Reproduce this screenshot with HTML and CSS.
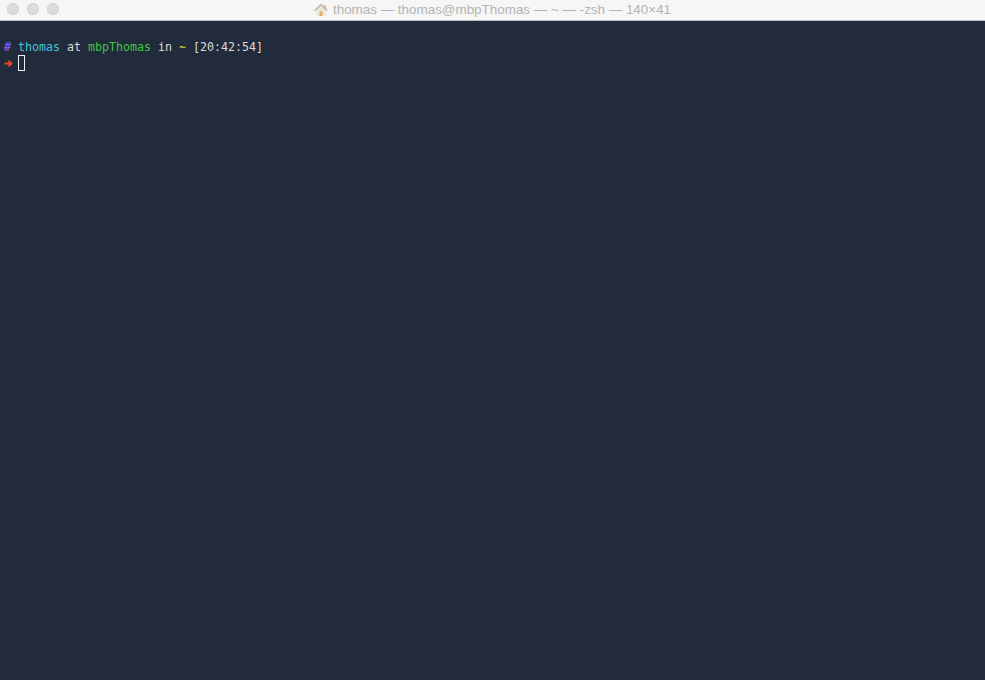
FILE: index.html
```html
<!DOCTYPE html>
<html lang="en">
<head>
<meta charset="utf-8">
<title>thomas — zsh</title>
<link rel="stylesheet" href="styles.css">
</head>
<body>
<div class="window">
  <header class="titlebar">
    <div class="lights">
      <span class="light"></span>
      <span class="light"></span>
      <span class="light"></span>
    </div>
    <div class="title">
      <svg class="home" width="14" height="14" viewBox="0 0 14 14" aria-hidden="true">
        <path d="M2.6 7V13H11.4V7L7 3Z" fill="#ece6dc"/>
        <path d="M0.8 7.6L7 1.8L13.2 7.6" fill="none" stroke="#c4b4a6" stroke-width="1.5"/>
        <rect x="10" y="2" width="1.6" height="3" fill="#c4b4a6"/>
        <rect x="5.6" y="8.4" width="2.8" height="4.6" fill="#e9a85c"/>
      </svg>
      <span>thomas — thomas@mbpThomas — ~ — -zsh — 140×41</span>
    </div>
  </header>
  <main class="terminal">
    <div class="line"></div>
    <div class="line"><span class="hash">#</span> <span class="user">thomas</span> <span class="plain">at</span> <span class="host">mbpThomas</span> <span class="plain">in</span> <span class="dir">~</span> <span class="plain">[20:42:54]</span></div>
    <div class="line"><svg class="arrow" width="9" height="7" viewBox="0 0 9 7" aria-hidden="true"><path d="M0.5 3.5H6.5M4.4 0.8L7.6 3.5L4.4 6.2" fill="none" stroke="#df4a2c" stroke-width="1.8"/></svg><span class="cursor"></span></div>
  </main>
</div>
</body>
</html>
```
FILE: styles.css
```css
html, body {
  margin: 0;
  padding: 0;
  height: 100%;
  overflow: hidden;
}
.window {
  display: flex;
  flex-direction: column;
  height: 680px;
  background: #222b3b;
}
.titlebar {
  display: flex;
  align-items: center;
  justify-content: center;
  position: relative;
  flex: none;
  height: 21px;
  box-sizing: border-box;
  background: #f6f6f6;
  border-bottom: 1px solid #bdbdbd;
}
.lights {
  position: absolute;
  left: 7px;
  top: 3px;
  display: flex;
  gap: 8px;
}
.light {
  width: 12px;
  height: 12px;
  border-radius: 50%;
  background: #dcdcdc;
  box-shadow: inset 0 0 0 1px #d4d4d4;
}
.title {
  display: flex;
  align-items: center;
  gap: 5px;
  font: 13.43px/18px "Liberation Sans", Arial, sans-serif;
  color: #b4b4b4;
}
.home { flex: none; }
.terminal {
  flex: 1;
  padding: 2px 0 0 4px;
  font: 11.63px/16px "DejaVu Sans Mono", monospace;
  color: #d8dadd;
}
.line {
  height: 16px;
  white-space: pre;
  display: flow-root;
}
.hash { color: #7c5af0; font-weight: bold; font-style: italic; }
.user { color: #3fc6d6; }
.plain { color: #d8dadd; }
.host { color: #3fc646; }
.dir { color: #c8c83c; font-weight: bold; }
.arrow {
  float: left;
  margin: 5px 5px 0 0;
}
.cursor {
  display: block;
  float: left;
  width: 7px;
  height: 16px;
  box-sizing: border-box;
  border: 1px solid #f0f0f0;
}
```
